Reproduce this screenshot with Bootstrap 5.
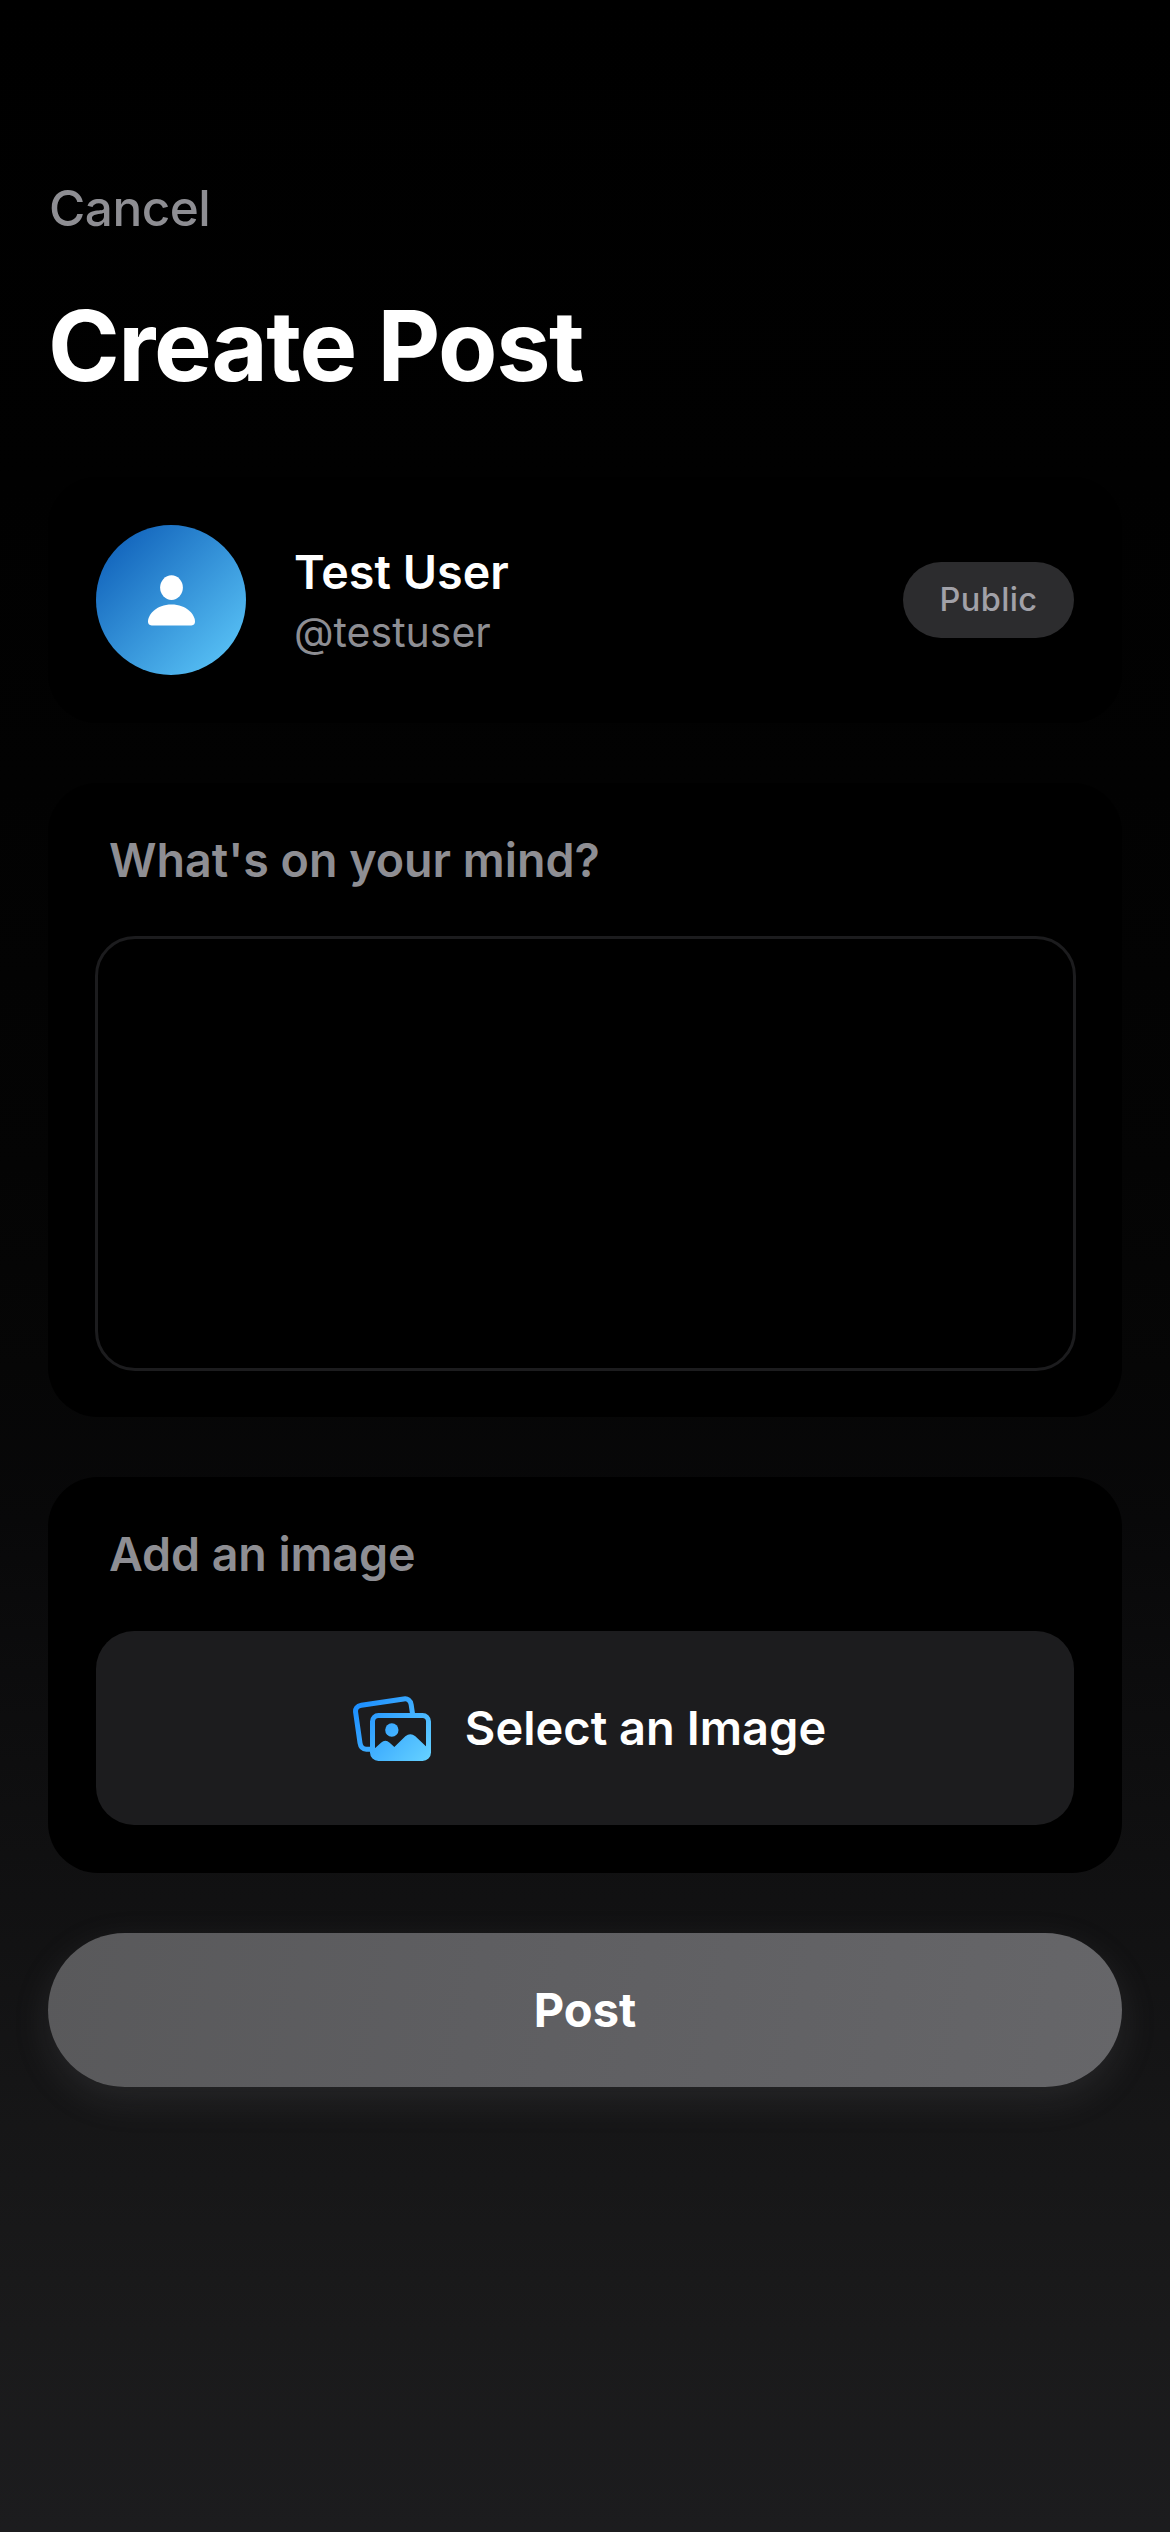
<!DOCTYPE html>
<html lang="en" data-bs-theme="dark">
<head>
<meta charset="utf-8">
<meta name="viewport" content="width=device-width, initial-scale=1">
<title>Create Post</title>
<link href="https://cdn.jsdelivr.net/npm/bootstrap@5.3.0/dist/css/bootstrap.min.css" rel="stylesheet">
<style>
  body {
    min-height: 2532px;
    font-family: Inter, "Liberation Sans", sans-serif;
    color: #fff;
    background: linear-gradient(180deg, #000 0%, #010101 19%, #020202 31%, #040404 46%, #060606 54%, #080809 60%, #0c0c0d 66%, #111112 75%, #161617 84%, #1a1a1b 92%, #1c1c1e 100%) no-repeat;
  }
  .screen { padding: 178px 48px 0; }
  .muted { color: #8e8e93; }
  .cancel-link { margin-left: 1px; font-size: 49.5px; font-weight: 500; line-height: 60px; letter-spacing: -.5px; }
  .screen-title { margin: 48px 0 71px; font-size: 97px; font-weight: 700; line-height: 120px; letter-spacing: -1.4px; }
  .panels { gap: 60px; }
  .panel { padding: 48px; border: 0; border-radius: 50px; background: #000; }
  .avatar { width: 150px; height: 150px; background: linear-gradient(135deg, #0a5ab4 0%, #1568be 14%, #60ccfc 100%); }
  .user-meta { gap: 6px; }
  .user-name { font-size: 46.6px; font-weight: 600; line-height: 57px; letter-spacing: .05px; }
  .user-handle { font-size: 41px; line-height: 50px; }
  .audience { height: 76px; padding: 0 36.5px; font-size: 32.5px; font-weight: 500; letter-spacing: .4px; color: #a1a1a8; background: #2c2c2e; }
  .field-label { padding-left: 13px; margin-bottom: 48px; font-size: 46.6px; font-weight: 600; line-height: 58px; letter-spacing: 0; }
  .field-label.short { letter-spacing: -.1px; }
  .post-input, .post-input:focus { width: 981px; height: 435px; margin: -1.5px; padding: 36px; border: 3px solid #1c1c1e; border-radius: 40px; background: #000; color: #fff; font-size: 48px; resize: none; box-shadow: none; }
  .picker { height: 194px; gap: 34px; padding: 0 0 0 9px; border: 0; border-radius: 38px; background: #1c1c1e; color: #fff; font-size: 47px; font-weight: 600; }
  .picker svg { margin-top: 2px; }
  .submit { height: 154px; border: 0; color: #fff; font-size: 47px; font-weight: 700;
    background: linear-gradient(100deg, #59595b 0%, #5e5e61 40%, #666669 100%);
    box-shadow: 0 12px 36px rgba(142, 142, 147, .15); }
</style>
</head>
<body>
<main class="screen">
  <a href="#" class="cancel-link muted d-block text-decoration-none">Cancel</a>
  <h1 class="screen-title">Create Post</h1>

  <div class="panels d-flex flex-column">
    <section class="panel d-flex align-items-center">
      <div class="avatar rounded-circle d-flex align-items-center justify-content-center flex-shrink-0">
        <svg width="47" height="52" viewBox="0 0 47 52" fill="#fff" aria-hidden="true">
          <ellipse cx="23.5" cy="13.6" rx="11.4" ry="12.3"/>
          <path d="M3.6 51.5C1 51.5 0 49.9 0 47.6 0 40.500 8.300 30.500 23.500 30.500S47 40.500 47 47.600C47 49.900 46 51.500 43.400 51.500Z"/>
        </svg>
      </div>
      <div class="user-meta d-flex flex-column ms-5">
        <div class="user-name">Test User</div>
        <div class="user-handle muted">@testuser</div>
      </div>
      <span class="audience rounded-pill d-flex align-items-center ms-auto">Public</span>
    </section>

    <section class="panel">
      <label for="postText" class="field-label muted d-block">What's on your mind?</label>
      <textarea id="postText" class="post-input form-control"></textarea>
    </section>

    <section class="panel">
      <div class="field-label short muted">Add an image</div>
      <button type="button" class="picker btn w-100 d-flex align-items-center justify-content-center">
        <svg width="78" height="66" viewBox="0 0 234 198" fill="none" aria-hidden="true">
          <defs>
            <linearGradient id="photoTint" gradientUnits="userSpaceOnUse" x1="15" y1="10" x2="215" y2="200">
              <stop offset="0" stop-color="#1a8cff"/>
              <stop offset="1" stop-color="#64d0ff"/>
            </linearGradient>
          </defs>
          <path d="M178.500 53L174.500 26C172.500 13 164 7 152 9L25 28C12 30 6 38 8 50L21 141C23 154 30 160 41 159.500H54" stroke="url(#photoTint)" stroke-width="15"/>
          <rect x="58.500" y="58.500" width="168" height="129" rx="18" stroke="url(#photoTint)" stroke-width="15"/>
          <circle cx="116.500" cy="102" r="20" fill="url(#photoTint)"/>
          <path d="M60 162L84 140Q97 129 110 140L124 153L157 121Q172 108 187 121L225 157V186H60Z" fill="url(#photoTint)"/>
        </svg>
        <span>Select an Image</span>
      </button>
    </section>

    <button type="button" class="submit btn rounded-pill w-100">Post</button>
  </div>
</main>
<script src="https://cdn.jsdelivr.net/npm/bootstrap@5.3.0/dist/js/bootstrap.bundle.min.js"></script>
</body>
</html>
